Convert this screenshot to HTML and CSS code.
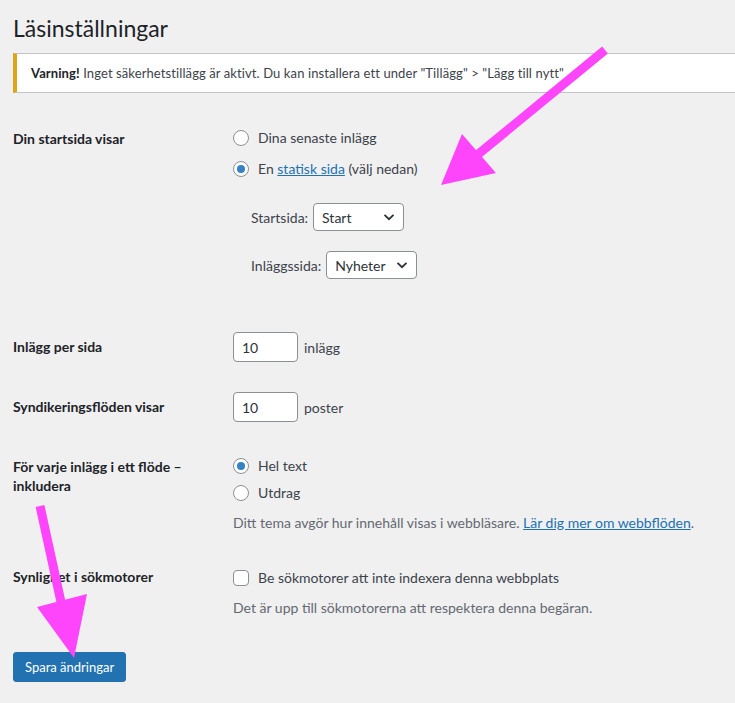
FILE: index.html
```html
<!DOCTYPE html>
<html lang="sv">

<head>
    <meta charset="UTF-8">
    <meta name="viewport" content="width=device-width, initial-scale=1.0">
    <title>Läsinställningar</title>
    <link rel="stylesheet" href="styles.css">
</head>

<body>

    <div class="wrap">
        <h1>Läsinställningar</h1>

        <div class="notice">
            <p><strong>Varning!</strong> Inget säkerhetstillägg är aktivt. Du kan installera ett under "Tillägg" &gt; "Lägg till nytt"</p>
        </div>

        <table class="form-table">
            <tr>
                <th>Din startsida visar</th>
                <td class="front-page">
                    <label class="choice"><span class="radio"></span>Dina senaste inlägg</label>
                    <label class="choice"><span class="radio checked"></span>En&nbsp;<a href="#">statisk sida</a>&nbsp;(välj nedan)</label>
                    <ul class="page-selects">
                        <li>
                            <span>Startsida:</span>
                            <div class="select">
                                <span>Start</span>
                                <svg width="12" height="8" viewBox="0 0 12 8"><path d="M1.5 1.8 L6 6.2 L10.5 1.8" fill="none" stroke="#2c3338" stroke-width="1.8"/></svg>
                            </div>
                        </li>
                        <li>
                            <span>Inläggssida:</span>
                            <div class="select">
                                <span>Nyheter</span>
                                <svg width="12" height="8" viewBox="0 0 12 8"><path d="M1.5 1.8 L6 6.2 L10.5 1.8" fill="none" stroke="#2c3338" stroke-width="1.8"/></svg>
                            </div>
                        </li>
                    </ul>
                </td>
            </tr>
            <tr>
                <th>Inlägg per sida</th>
                <td><div class="number-row"><input class="small-text" type="text" value="10"> inlägg</div></td>
            </tr>
            <tr>
                <th>Syndikeringsflöden visar</th>
                <td><div class="number-row"><input class="small-text" type="text" value="10"> poster</div></td>
            </tr>
            <tr>
                <th>För varje inlägg i ett flöde – inkludera</th>
                <td>
                    <label class="choice short"><span class="radio checked"></span>Hel text</label>
                    <label class="choice short"><span class="radio"></span>Utdrag</label>
                    <p class="description">Ditt tema avgör hur innehåll visas i webbläsare. <a href="#">Lär dig mer om webbflöden</a>.</p>
                </td>
            </tr>
            <tr>
                <th>Synlighet i sökmotorer</th>
                <td>
                    <label class="choice"><span class="checkbox"></span>Be sökmotorer att inte indexera denna webbplats</label>
                    <p class="description tight">Det är upp till sökmotorerna att respektera denna begäran.</p>
                </td>
            </tr>
        </table>

        <button class="button-primary">Spara ändringar</button>
    </div>

    <!-- pilar ovanpå sidan -->
    <svg class="arrows" width="735" height="703" viewBox="0 0 735 703">
        <line x1="605" y1="50" x2="476" y2="156" stroke="#ff45fb" stroke-width="9"/>
        <polygon points="462,134 496,173 441,185" fill="#ff45fb"/>
        <line x1="40" y1="506" x2="61" y2="602" stroke="#ff45fb" stroke-width="9"/>
        <polygon points="37,607 87,594 74,658" fill="#ff45fb"/>
    </svg>

</body>

</html>
```

FILE: styles.css
```css
body {
    margin: 0;
    background: #f0f0f1;
    color: #3c434a;
    font-family: Lato, "Noto Sans", sans-serif;
    font-size: 14px;
    overflow: hidden;
    position: relative;
    height: 703px;
}

.wrap {
    padding: 0 0 0 13px;
}

h1 {
    margin: 0;
    padding-top: 14px;
    font-size: 23px;
    line-height: 29px;
    font-weight: 400;
    color: #1d2327;
}

.notice {
    margin: 10px -2px 0 0;
    background: #fff;
    border: 1px solid #c3c4c7;
    border-left: 4px solid #dba617;
}

.notice p {
    margin: 0;
    padding: 11px 14px;
    font-size: 13px;
    line-height: 16px;
    letter-spacing: 0.1px;
}

.notice strong {
    font-weight: 700;
    color: #1d2327;
}

.form-table {
    margin-top: 16px;
    border-collapse: collapse;
}

.form-table th {
    width: 200px;
    padding: 20px 10px 20px 0;
    text-align: left;
    vertical-align: top;
    font-weight: 700;
    line-height: 19px;
    color: #1d2327;
}

.form-table td {
    padding: 15px 10px;
    vertical-align: top;
}

.form-table td.front-page {
    padding-top: 13px;
}

.choice {
    display: flex;
    align-items: center;
    height: 31px;
}

.choice.short {
    height: 27px;
}

a {
    color: #2271b1;
    text-decoration: underline;
}

.radio,
.checkbox {
    width: 14px;
    height: 14px;
    margin-right: 9px;
    border: 1px solid #8c8f94;
    background: #fff;
    border-radius: 50%;
    display: flex;
    align-items: center;
    justify-content: center;
    flex-shrink: 0;
}

.checkbox {
    border-radius: 4px;
}

.radio.checked::after {
    content: "";
    width: 8px;
    height: 8px;
    border-radius: 50%;
    background: #3582c4;
}

.page-selects {
    list-style: none;
    margin: 0 0 23px;
    padding: 0 0 0 18px;
}

.page-selects li {
    display: flex;
    align-items: center;
    margin-top: 19px;
}

.page-selects li + li {
    margin-top: 20px;
}

.select {
    display: flex;
    align-items: center;
    justify-content: space-between;
    width: 73px;
    height: 26px;
    margin-left: 5px;
    padding: 0 8px;
    background: #fff;
    border: 1px solid #8c8f94;
    border-radius: 4px;
    color: #2c3338;
}

.number-row {
    display: flex;
    align-items: center;
    gap: 6px;
}

.small-text {
    width: 65px;
    height: 30px;
    box-sizing: border-box;
    padding: 0 8px;
    border: 1px solid #8c8f94;
    border-radius: 4px;
    font: inherit;
    color: #2c3338;
}

.description {
    margin: 8px 0 0;
    font-size: 14px;
    line-height: 18px;
    color: #646970;
}

.description.tight {
    margin-top: 6px;
}

.button-primary {
    margin-top: 20px;
    height: 30px;
    padding: 0 11px;
    background: #2271b1;
    border: 1px solid #2271b1;
    border-radius: 3px;
    color: #fff;
    font: inherit;
    font-size: 13px;
}

.arrows {
    position: absolute;
    top: 0;
    left: 0;
    pointer-events: none;
}
```
